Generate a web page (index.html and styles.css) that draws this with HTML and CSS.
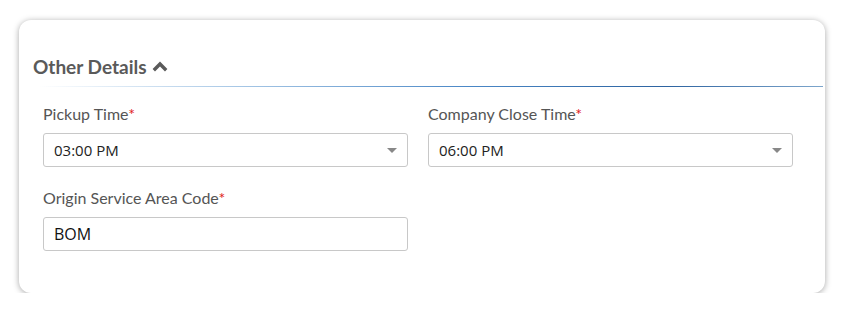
FILE: index.html
```html
<!DOCTYPE html>
<html lang="en">
<head>
  <meta charset="UTF-8">
  <title>Other Details</title>
  <link rel="stylesheet" href="styles.css">
</head>
<body>

<div class="card">
  <div class="section-head">
    <h2>Other Details</h2>
    <svg class="chevron" width="16" height="11" viewBox="0 0 16 11">
      <path d="M1.8 9.2 L8 3 L14.2 9.2" fill="none" stroke="#5a5a5a" stroke-width="3.4"/>
    </svg>
  </div>
  <div class="divider"></div>

  <div class="form-grid">
    <div class="field">
      <label>Pickup Time<span class="req">*</span></label>
      <div class="select">
        <span>03:00 PM</span>
        <span class="caret"></span>
      </div>
    </div>
    <div class="field">
      <label>Company Close Time<span class="req">*</span></label>
      <div class="select">
        <span>06:00 PM</span>
        <span class="caret"></span>
      </div>
    </div>
    <div class="field">
      <label>Origin Service Area Code<span class="req">*</span></label>
      <input type="text" class="text-input" value="BOM">
    </div>
  </div>
</div>

</body>
</html>
```
FILE: styles.css
```css
body {
  margin: 0;
  padding: 20px 20px 0 19px;
  background: #fff;
  font-family: Lato, "Open Sans", sans-serif;
}

.card {
  width: 806px;
  height: 273px;
  box-sizing: border-box;
  background: #fff;
  border-radius: 12px;
  box-shadow: 0 1px 6px rgba(0, 0, 0, 0.35);
  padding: 31px 2px 0 14px;
}

.section-head {
  display: flex;
  align-items: center;
  gap: 5px;
  height: 30px;
}

.section-head h2 {
  margin: 0;
  font-size: 19px;
  font-weight: bold;
  color: #5a5a5a;
}

.chevron {
  margin-top: 1px;
}

.divider {
  height: 1px;
  margin: 5px 0 0 6px;
  background: linear-gradient(to right, #ffffff 0%, #a8c8e6 25%, #4a87c6 55%, #2d63a0 80%, #7ea6cc 100%);
}

.form-grid {
  display: grid;
  grid-template-columns: 365px 365px;
  column-gap: 20px;
  row-gap: 21px;
  padding: 17px 0 0 10px;
}

.field label {
  display: block;
  font-size: 16px;
  color: #555;
  line-height: 20px;
  margin-bottom: 9px;
}

.req {
  color: #e02020;
}

.select,
.text-input {
  box-sizing: border-box;
  height: 34px;
  width: 100%;
  border: 1px solid #c8c8c8;
  border-radius: 3px;
  padding: 0 10px;
  font-family: "Open Sans", sans-serif;
  font-size: 15px;
  color: #222;
  background: #fff;
}

.select {
  display: flex;
  align-items: center;
  justify-content: space-between;
}

.caret {
  width: 0;
  height: 0;
  border-left: 5px solid transparent;
  border-right: 5px solid transparent;
  border-top: 5px solid #888;
}

.text-input {
  font-size: 16px;
  color: #111;
  outline: none;
}
```
